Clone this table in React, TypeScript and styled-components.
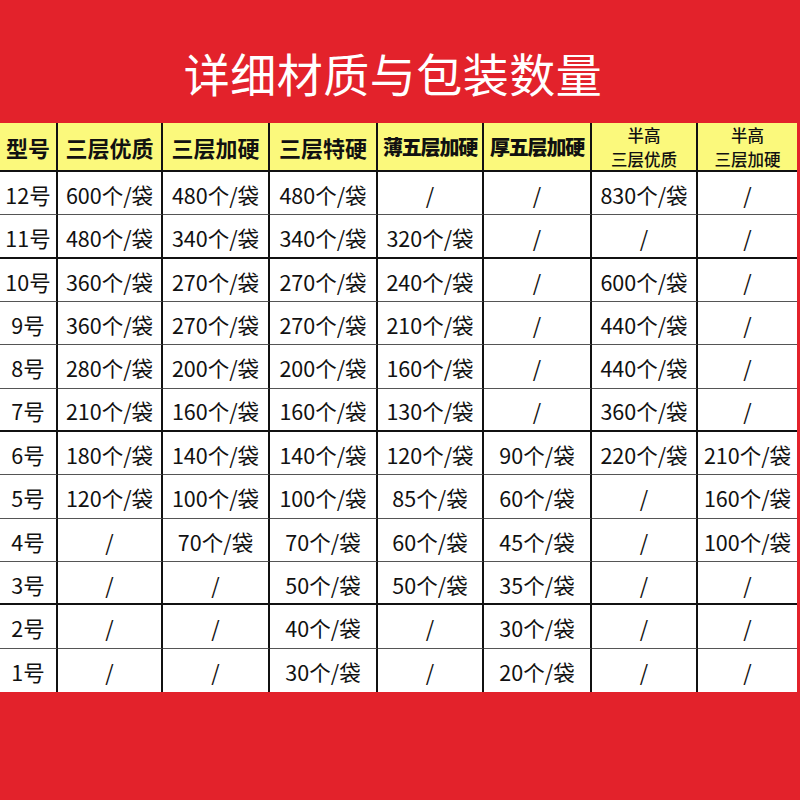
import React from 'react';
import styled, { createGlobalStyle } from 'styled-components';

const Global = createGlobalStyle`
  html, body { margin: 0; padding: 0; }
  body {
    background: #e3222b;
    font-family: "Noto Sans CJK SC", "Noto Sans", sans-serif;
  }
`;

const Page = styled.div`
  width: 800px;
  height: 800px;
  background: #e3222b;
  overflow: hidden;
`;

const Title = styled.h1`
  margin: 0;
  height: 123px;
  box-sizing: border-box;
  padding: 20px 14px 0 0;
  display: flex;
  align-items: center;
  justify-content: center;
  color: #fff;
  font-size: 46px;
  font-weight: 400;
  letter-spacing: 0.5px;
`;

const Table = styled.div`
  width: 797px;
  display: grid;
  grid-template-columns: 58px 105px 107px 108px 106px 108px 106px 99px;
  grid-template-rows: 49px repeat(12, 43.33px);
`;

const Cell = styled.div<{ head?: boolean; last?: boolean; bottom?: 'none' | 'thin' | 'thick' }>`
  box-sizing: border-box;
  display: flex;
  align-items: center;
  justify-content: center;
  background: ${p => (p.head ? '#fbf97c' : '#fff')};
  color: #111;
  border-right: ${p => (p.last ? 'none' : '2px solid #111')};
  border-bottom: ${p =>
    p.bottom === 'none' ? 'none' : p.bottom === 'thick' ? '2px solid #111' : '1.5px solid #555'};
  font-size: 21.5px;
  white-space: nowrap;
  padding-top: ${p => (p.head ? '0' : '3px')};
  overflow: visible;
`;

const HeadText = styled.span<{ tight?: boolean }>`
  font-size: ${p => (p.tight ? '20px' : '22px')};
  font-weight: ${p => (p.tight ? 900 : 700)};
  letter-spacing: ${p => (p.tight ? '-1.2px' : '0')};
`;

const HeadStack = styled.span`
  display: flex;
  flex-direction: column;
  align-items: center;
  font-size: 16.5px;
  font-weight: 500;
  line-height: 24px;
  margin-top: 1px;
`;

const headers: { label: string; tight?: boolean; stack?: boolean }[] = [
  { label: '型号' },
  { label: '三层优质' },
  { label: '三层加硬' },
  { label: '三层特硬' },
  { label: '薄五层加硬', tight: true },
  { label: '厚五层加硬', tight: true },
  { label: '半高\n三层优质', stack: true },
  { label: '半高\n三层加硬', stack: true },
];

const rows: string[][] = [
  ['12号', '600个/袋', '480个/袋', '480个/袋', '/', '/', '830个/袋', '/'],
  ['11号', '480个/袋', '340个/袋', '340个/袋', '320个/袋', '/', '/', '/'],
  ['10号', '360个/袋', '270个/袋', '270个/袋', '240个/袋', '/', '600个/袋', '/'],
  ['9号', '360个/袋', '270个/袋', '270个/袋', '210个/袋', '/', '440个/袋', '/'],
  ['8号', '280个/袋', '200个/袋', '200个/袋', '160个/袋', '/', '440个/袋', '/'],
  ['7号', '210个/袋', '160个/袋', '160个/袋', '130个/袋', '/', '360个/袋', '/'],
  ['6号', '180个/袋', '140个/袋', '140个/袋', '120个/袋', '90个/袋', '220个/袋', '210个/袋'],
  ['5号', '120个/袋', '100个/袋', '100个/袋', '85个/袋', '60个/袋', '/', '160个/袋'],
  ['4号', '/', '70个/袋', '70个/袋', '60个/袋', '45个/袋', '/', '100个/袋'],
  ['3号', '/', '/', '50个/袋', '50个/袋', '35个/袋', '/', '/'],
  ['2号', '/', '/', '40个/袋', '/', '30个/袋', '/', '/'],
  ['1号', '/', '/', '30个/袋', '/', '20个/袋', '/', '/'],
];

// rows whose bottom rule is drawn heavier in the original
const heavy = new Set([1, 5, 9]);

export default function App() {
  return (
    <Page>
      <Global />
      <Title>详细材质与包装数量</Title>
      <Table>
        {headers.map((h, i) => (
          <Cell key={'h' + i} head last={i === headers.length - 1} bottom="thick">
            {h.stack ? (
              <HeadStack>
                {h.label.split('\n').map((l, j) => (
                  <span key={j}>{l}</span>
                ))}
              </HeadStack>
            ) : (
              <HeadText tight={h.tight}>{h.label}</HeadText>
            )}
          </Cell>
        ))}
        {rows.map((r, ri) =>
          r.map((v, ci) => (
            <Cell
              key={ri + '-' + ci}
              last={ci === r.length - 1}
              bottom={ri === rows.length - 1 ? 'none' : heavy.has(ri) ? 'thick' : 'thin'}
            >
              {v}
            </Cell>
          ))
        )}
      </Table>
    </Page>
  );
}
